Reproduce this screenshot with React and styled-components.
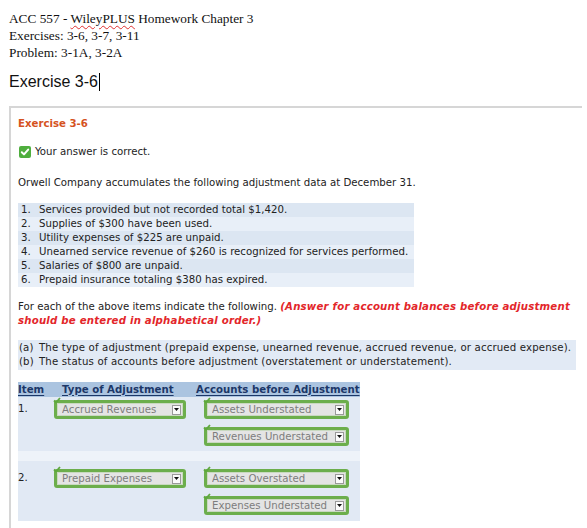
import React from "react";
import styled, { createGlobalStyle } from "styled-components";

const GlobalStyle = createGlobalStyle`
  body {
    margin: 0;
    background: #fff;
  }
`;

const Page = styled.div`
  padding: 10px 0 0 9px;
`;

const DocHeader = styled.div`
  font-family: "Liberation Serif", "Times New Roman", serif;
  font-size: 13.3px;
  line-height: 17px;
  color: #111;
`;

const Spell = styled.span`
  text-decoration: underline wavy #e03030;
  text-decoration-thickness: 1px;
  text-underline-offset: 2px;
`;

const DocTitle = styled.div`
  margin-top: 11px;
  font-family: "Liberation Sans", Arial, sans-serif;
  font-size: 16px;
  line-height: 20px;
  color: #111;
  display: flex;
  align-items: center;
`;

const Caret = styled.span`
  display: inline-block;
  width: 1px;
  height: 18px;
  background: #000;
  margin-left: 1px;
`;

const Panel = styled.div`
  margin-top: 14px;
  width: 573px;
  box-sizing: border-box;
  border-top: 2px solid #d6d6d6;
  border-left: 2px solid #d6d6d6;
  padding: 9px 0 10px 7px;
  font-family: "DejaVu Sans", Verdana, sans-serif;
  font-size: 10.2px;
  line-height: 14px;
  color: #222;
`;

const ExTitle = styled.div`
  color: #d5531f;
  font-weight: bold;
`;

const Correct = styled.div`
  margin-top: 14px;
  display: flex;
  align-items: center;
  gap: 4px;
  padding-left: 1px;
`;

const Para = styled.div`
  margin-top: ${(p) => p.$top || 0}px;
  white-space: nowrap;
`;

const Warn = styled.span`
  color: #e3262a;
  font-weight: bold;
  font-style: italic;
  letter-spacing: 0.2px;
`;

const List = styled.div`
  margin-top: 13px;
  width: 396px;
`;

const ListRow = styled.div`
  display: flex;
  white-space: nowrap;
  background: ${(p) => (p.$alt ? "#e8eff8" : "#dce6f2")};
  padding-left: 3px;
`;

const Num = styled.span`
  width: ${(p) => p.$w || 18}px;
  flex: none;
`;

const Block = styled.div`
  margin-top: 12px;
  width: 558px;
  background: #e2eaf5;
  padding: 1px 0;
`;

const BlockRow = styled.div`
  display: flex;
  white-space: nowrap;
  padding-left: 1px;
  letter-spacing: 0.15px;
`;

const Table = styled.div`
  margin-top: 12px;
  width: 342px;
`;

const HeadRow = styled.div`
  display: grid;
  grid-template-columns: 44px 134px 1fr;
  background: #abc4e0;
  height: 15px;
  align-items: center;
  font-weight: bold;
  color: #1c3768;
`;

const HeadCell = styled.span`
  text-decoration: underline;
  text-underline-offset: 2px;
  white-space: nowrap;
`;

const Row = styled.div`
  display: grid;
  grid-template-columns: 36px 150px 1fr;
  background: #e1e9f4;
  padding: ${(p) => (p.$first ? "3px 0 5px" : "8px 0 6px")};
`;

const Spacer = styled.div`
  height: 10px;
  background: #eef3f9;
`;

const ItemNum = styled.div`
  padding-top: 2px;
`;

const Stack = styled.div`
  display: flex;
  flex-direction: column;
  gap: 8px;
`;

const SelectWrap = styled.div`
  position: relative;
  width: ${(p) => p.$w}px;
  height: 19px;
  box-sizing: border-box;
  border: 3px solid #6cae4c;
  border-radius: 3px;
  background: #e4e4e4;
  box-shadow: inset 0 0 0 1px #c9d9c0;
  display: flex;
  align-items: center;
  color: #7d7d7d;
  padding-left: 5px;
`;

const SelectText = styled.span`
  flex: 1;
  white-space: nowrap;
  overflow: hidden;
`;

const Arrow = styled.span`
  width: 9px;
  height: 10px;
  margin-right: 2px;
  flex: none;
  background: #fbfbfb;
  border: 1px solid #9a9a9a;
  box-sizing: border-box;
  display: flex;
  align-items: center;
  justify-content: center;
`;

const Tick = styled.svg`
  position: absolute;
  left: -4px;
  top: -6px;
`;

function CheckBox() {
  return (
    <svg width="12" height="12" viewBox="0 0 12 12">
      <rect x="0" y="0" width="12" height="12" rx="2" fill="#4fae3e" />
      <path d="M2.8 6.2 L5 8.4 L9.2 3.6" stroke="#fff" strokeWidth="2" fill="none" strokeLinecap="round" strokeLinejoin="round" />
    </svg>
  );
}

function Select({ value, w }) {
  return (
    <SelectWrap $w={w}>
      <Tick width="8" height="7" viewBox="0 0 8 7">
        <path d="M1 3.5 L3 5.5 L7 1" stroke="#5ea83d" strokeWidth="1.8" fill="none" />
      </Tick>
      <SelectText>{value}</SelectText>
      <Arrow>
        <svg width="5" height="3" viewBox="0 0 5 3">
          <path d="M0 0 L5 0 L2.5 3 Z" fill="#111" />
        </svg>
      </Arrow>
    </SelectWrap>
  );
}

const items = [
  "Services provided but not recorded total $1,420.",
  "Supplies of $300 have been used.",
  "Utility expenses of $225 are unpaid.",
  "Unearned service revenue of $260 is recognized for services performed.",
  "Salaries of $800 are unpaid.",
  "Prepaid insurance totaling $380 has expired.",
];

const answers = [
  { n: "1.", type: "Accrued Revenues", accts: ["Assets Understated", "Revenues Understated"] },
  { n: "2.", type: "Prepaid Expenses", accts: ["Assets Overstated", "Expenses Understated"] },
];

export default function App() {
  return (
    <Page>
      <GlobalStyle />
      <DocHeader>
        <div>
          ACC 557 - <Spell>WileyPLUS</Spell> Homework Chapter 3
        </div>
        <div>Exercises: 3-6, 3-7, 3-11</div>
        <div>Problem: 3-1A, 3-2A</div>
      </DocHeader>
      <DocTitle>
        Exercise 3-6
        <Caret />
      </DocTitle>

      <Panel>
        <ExTitle>Exercise 3-6</ExTitle>
        <Correct>
          <CheckBox />
          Your answer is correct.
        </Correct>
        <Para $top={17}>Orwell Company accumulates the following adjustment data at December 31.</Para>

        <List>
          {items.map((t, i) => (
            <ListRow key={i} $alt={i % 2 === 1}>
              <Num>{i + 1}.</Num>
              {t}
            </ListRow>
          ))}
        </List>

        <Para $top={13}>
          For each of the above items indicate the following.{" "}
          <Warn>(Answer for account balances before adjustment</Warn>
        </Para>
        <Para>
          <Warn>should be entered in alphabetical order.)</Warn>
        </Para>

        <Block>
          <BlockRow>
            <Num $w={20}>(a)</Num>
            The type of adjustment (prepaid expense, unearned revenue, accrued revenue, or accrued expense).
          </BlockRow>
          <BlockRow>
            <Num $w={20}>(b)</Num>
            The status of accounts before adjustment (overstatement or understatement).
          </BlockRow>
        </Block>

        <Table>
          <HeadRow>
            <HeadCell>Item</HeadCell>
            <HeadCell>Type of Adjustment</HeadCell>
            <HeadCell>Accounts before Adjustment</HeadCell>
          </HeadRow>
          {answers.map((a, i) => (
            <React.Fragment key={a.n}>
              {i > 0 && <Spacer />}
              <Row $first={i === 0}>
                <ItemNum>{a.n}</ItemNum>
                <div>
                  <Select value={a.type} w={132} />
                </div>
                <Stack>
                  {a.accts.map((v) => (
                    <Select key={v} value={v} w={145} />
                  ))}
                </Stack>
              </Row>
            </React.Fragment>
          ))}
        </Table>
      </Panel>
    </Page>
  );
}
